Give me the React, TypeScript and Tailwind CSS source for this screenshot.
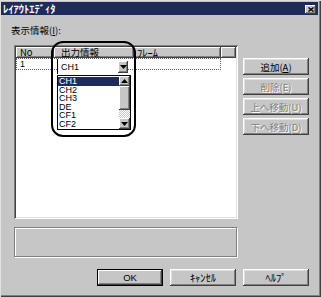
import React from "react";

const raised =
  "bg-[#c6c6c6] shadow-[inset_-1px_-1px_#404040,inset_1px_1px_#ffffff,inset_-2px_-2px_#808080,inset_2px_2px_#dfdfdf]";
const raisedThin =
  "bg-[#c6c6c6] shadow-[inset_-1px_-1px_#404040,inset_1px_1px_#ffffff,inset_-2px_-2px_#808080]";
const latin = "font-['Liberation_Sans',Arial,sans-serif]";

function DownTri() {
  return (
    <svg width="7" height="4" viewBox="0 0 7 4">
      <polygon points="0,0 7,0 3.5,4" fill="#000" />
    </svg>
  );
}
function UpTri() {
  return (
    <svg width="7" height="4" viewBox="0 0 7 4">
      <polygon points="0,4 7,4 3.5,0" fill="#000" />
    </svg>
  );
}

function Btn({
  children,
  disabled,
  def,
}: {
  children: React.ReactNode;
  disabled?: boolean;
  def?: boolean;
}) {
  return (
    <div
      className={
        def
          ? "w-[66px] h-[17px] border border-black flex items-center justify-center text-[9.5px] leading-[12px]"
          : "w-[66px] h-[17px] flex items-center justify-center text-[9.5px] leading-[12px] " +
            raised
      }
    >
      {def ? (
        <div
          className={
            "w-full h-full flex items-center justify-center " + raisedThin
          }
        >
          {children}
        </div>
      ) : (
        <span
          className={
            disabled
              ? "text-[#808080] [text-shadow:1px_1px_0_#ffffff]"
              : "text-black"
          }
        >
          {children}
        </span>
      )}
    </div>
  );
}

export default function App() {
  const items = ["CH1", "CH2", "CH3", "DE", "CF1", "CF2"];
  return (
    <div className="relative w-[321px] h-[297px] bg-[#c6c6c6] flex flex-col pt-[2px] pl-[1px] pr-[3px] shadow-[inset_1px_1px_#dfdfdf,inset_-1px_-1px_#404040,inset_-2px_-2px_#808080] font-['Noto_Sans_CJK_JP',sans-serif] text-black overflow-hidden">
      {/* Title bar */}
      <div className="h-[13px] bg-[#1f2b5b] flex items-center justify-between">
        <span className="pl-[2px] text-[10.5px] leading-[13px] font-bold text-white">
          ﾚｲｱｳﾄｴﾃﾞｨﾀ
        </span>
        <div
          className={
            "mr-[2px] mt-[2px] w-[11px] h-[9px] flex items-center justify-center " +
            raisedThin
          }
        >
          <svg width="6" height="5" viewBox="0 0 6 5">
            <path
              d="M0.5 0.5 L5.5 4.5 M5.5 0.5 L0.5 4.5"
              stroke="#000"
              strokeWidth="1.4"
            />
          </svg>
        </div>
      </div>

      {/* Body */}
      <div className="flex pl-[10px] mt-[9px]">
        <div className="flex flex-col w-[227px]">
          <div className="h-[12px] text-[9.5px] leading-[12px]">
            表示情報(<span className="underline">I</span>):
          </div>
          <div className="ml-[3px] mt-[9px] w-[224px] h-[174px] bg-white p-[2px] flex flex-col shadow-[inset_1px_1px_#808080,inset_-1px_-1px_#ffffff,inset_2px_2px_#404040,inset_-2px_-2px_#dfdfdf]">
            <div className="flex h-[11px] text-[9.5px] leading-[11px]">
              <div className={"w-[38px] pl-[4px] " + raisedThin}>No</div>
              <div className={"w-[80px] pl-[7px] " + raisedThin}>出力情報</div>
              <div className={"w-[87px] pl-[3px] text-[10.5px] " + raisedThin}>
                ﾌﾚｰﾑ
              </div>
              <div className={"flex-1 " + raisedThin}></div>
            </div>
            <div
              className={
                "w-[205px] h-[12px] border border-dotted border-[#606060] pl-[3px] text-[9px] leading-[10px] " +
                latin
              }
            >
              1
            </div>
          </div>
          <div className="ml-[3px] mt-[8px] w-[223px] h-[30px] border border-[#808080] shadow-[1px_1px_#ffffff,inset_1px_1px_#ffffff]"></div>
        </div>

        <div className="flex flex-col gap-[3px] ml-[5px] pt-[34px]">
          <Btn>
            追加(<span className="underline">A</span>)
          </Btn>
          <Btn disabled>削除(E)</Btn>
          <Btn disabled>上へ移動(U)</Btn>
          <Btn disabled>下へ移動(D)</Btn>
        </div>
      </div>

      {/* Bottom buttons */}
      <div className="flex justify-end gap-[7px] mt-[12px] pr-[9px]">
        <Btn def>
          <span className={"text-[9.5px] " + latin}>OK</span>
        </Btn>
        <Btn>
          <span className="text-[10.5px]">ｷｬﾝｾﾙ</span>
        </Btn>
        <Btn>
          <span className="text-[10.5px]">ﾍﾙﾌﾟ</span>
        </Btn>
      </div>

      {/* In-place combo editor */}
      <div className="absolute left-[57px] top-[59px] w-[71px] h-[15px] bg-white border-l border-black flex items-center">
        <span className={"pl-[3px] text-[9px] leading-[10px] " + latin}>CH1</span>
        <div
          className={
            "ml-auto mr-[0px] w-[10px] h-[12px] flex items-center justify-center " +
            raisedThin
          }
        >
          <DownTri />
        </div>
      </div>

      {/* Dropdown list */}
      <div className="absolute left-[57px] top-[75px] w-[74px] h-[55px] bg-white border border-black flex">
        <div className={"flex-1 flex flex-col pt-[1px] " + latin}>
          {items.map((it, i) => (
            <div
              key={it}
              className={
                i === 0
                  ? "h-[8.5px] leading-[8.5px] text-[9px] pl-[1px] bg-[#1f2b5b] text-white"
                  : "h-[8.5px] leading-[8.5px] text-[9px] pl-[1px] text-black"
              }
            >
              {it}
            </div>
          ))}
        </div>
        <div className="w-[11px] flex flex-col">
          <div className={"h-[10px] flex items-center justify-center " + raisedThin}>
            <UpTri />
          </div>
          <div className={"h-[24px] " + raisedThin}></div>
          <div className="flex-1 bg-[repeating-conic-gradient(#ffffff_0_25%,#c6c6c6_0_50%)] bg-[length:2px_2px]"></div>
          <div className={"h-[11px] flex items-center justify-center " + raisedThin}>
            <DownTri />
          </div>
        </div>
      </div>

      {/* Annotation */}
      <div className="absolute left-[51px] top-[41px] w-[85px] h-[96px] border-2 border-black rounded-[12px] pointer-events-none"></div>
    </div>
  );
}
